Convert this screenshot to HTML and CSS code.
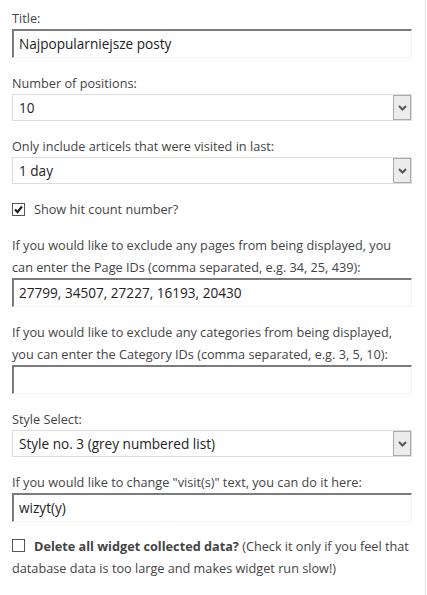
FILE: index.html
```html
<!DOCTYPE html>
<html>
<head>
<meta charset="utf-8">
<link rel="stylesheet" href="styles.css">
</head>
<body>
<div class="widget">
  <div class="field">
    <label class="lbl">Title:</label>
    <div class="txt">Najpopularniejsze posty</div>
  </div>
  <div class="field">
    <label class="lbl">Number of positions:</label>
    <div class="sel"><span class="val">10</span><span class="arrow"><svg width="9" height="6" viewBox="0 0 9 6"><path d="M1 1 L4.5 4.5 L8 1" fill="none" stroke="#555" stroke-width="2"/></svg></span></div>
  </div>
  <div class="field">
    <label class="lbl">Only include articels that were visited in last:</label>
    <div class="sel"><span class="val">1 day</span><span class="arrow"><svg width="9" height="6" viewBox="0 0 9 6"><path d="M1 1 L4.5 4.5 L8 1" fill="none" stroke="#555" stroke-width="2"/></svg></span></div>
  </div>
  <div class="check-row">
    <span class="box"><svg width="11" height="11" viewBox="0 0 11 11"><path d="M2 5.5 L4.5 8 L9 2.5" fill="none" stroke="#222" stroke-width="2.2"/></svg></span>
    <span>Show hit count number?</span>
  </div>
  <div class="field">
    <label class="lbl">If you would like to exclude any pages from being displayed, you can enter the Page IDs (comma separated, e.g. 34, 25, 439):</label>
    <div class="txt">27799, 34507, 27227, 16193, 20430</div>
  </div>
  <div class="field">
    <label class="lbl">If you would like to exclude any categories from being displayed, you can enter the Category IDs (comma separated, e.g. 3, 5, 10):</label>
    <div class="txt"></div>
  </div>
  <div class="field">
    <label class="lbl">Style Select:</label>
    <div class="sel"><span class="val">Style no. 3 (grey numbered list)</span><span class="arrow"><svg width="9" height="6" viewBox="0 0 9 6"><path d="M1 1 L4.5 4.5 L8 1" fill="none" stroke="#555" stroke-width="2"/></svg></span></div>
  </div>
  <div class="field tight">
    <label class="lbl">If you would like to change "visit(s)" text, you can do it here:</label>
    <div class="txt">wizyt(y)</div>
  </div>
  <div class="check-row delete">
    <p><span class="box"></span><b>Delete all widget collected data?</b> (Check it only if you feel that database data is too large and makes widget run slow!)</p>
  </div>
</div>
</body>
</html>
```

FILE: styles.css
```css
html, body {
  margin: 0;
  padding: 0;
  background: #fff;
}
.widget {
  width: 401px;
  height: 595px;
  padding: 7px 12px 0 12px;
  border-right: 1px solid #e3e3e3;
  font-family: "Open Sans", sans-serif;
  font-size: 12.7px;
  line-height: 22px;
  color: #444;
  box-sizing: content-box;
}
.field {
  margin-bottom: 14px;
}
.field.tight {
  margin-bottom: 13px;
}
.lbl {
  display: block;
}
.txt {
  box-sizing: border-box;
  height: 29px;
  width: 400px;
  border-style: solid;
  border-width: 2px 1px 1px 2px;
  border-color: #7b7b7b #f3f3f3 #f3f3f3 #7b7b7b;
  padding: 0 0 0 5px;
  font-size: 13.6px;
  line-height: 25px;
  color: #222;
}
.sel {
  box-sizing: border-box;
  height: 27px;
  width: 400px;
  border: 1px solid #dcdcdc;
  display: flex;
  align-items: stretch;
  font-size: 13.6px;
  color: #222;
}
.sel .val {
  flex: 1;
  padding-left: 6px;
  line-height: 25px;
}
.sel .arrow {
  width: 16px;
  border: 1px solid #a9a9a9;
  background: #ececec;
  display: flex;
  align-items: center;
  justify-content: center;
}
.check-row {
  display: flex;
  align-items: center;
  gap: 9px;
  margin: 0 0 14px 0;
}
.box {
  box-sizing: border-box;
  width: 13px;
  height: 13px;
  border: 1px solid #555;
  display: inline-flex;
  align-items: center;
  justify-content: center;
  background: #fff;
}
.delete p {
  margin: 0;
}
.delete .box {
  vertical-align: -1px;
  margin-right: 9px;
}
.delete b {
  font-weight: 700;
}
```
